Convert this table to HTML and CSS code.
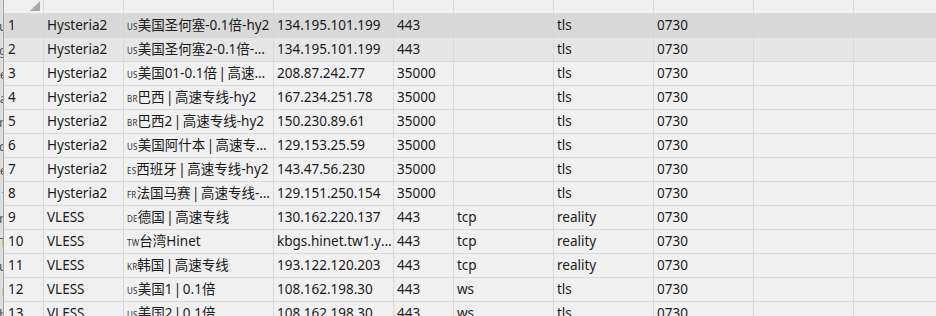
FILE: index.html
```html
<!DOCTYPE html>
<html>
<head>
<meta charset="utf-8">
<link rel="stylesheet" href="styles.css">
</head>
<body>
<div class="view">
  <div class="strip">
    <div class="frag hdr"></div>
    <div class="frag">u</div>
    <div class="frag">g</div>
    <div class="frag">e</div>
    <div class="frag">a</div>
    <div class="frag">n</div>
    <div class="frag">d</div>
    <div class="frag">e</div>
    <div class="frag">t</div>
    <div class="frag">n</div>
    <div class="frag">T</div>
    <div class="frag">u</div>
    <div class="frag">r</div>
    <div class="frag">h</div>
  </div>
  <div class="grid">
    <div class="row head">
      <div class="cell corner"><span class="tri"></span></div>
      <div class="cell"></div><div class="cell"></div><div class="cell"></div><div class="cell"></div>
      <div class="cell"></div><div class="cell"></div><div class="cell"></div><div class="cell"></div><div class="cell"></div>
    </div>
    <div class="row sel">
      <div class="cell num">1</div><div class="cell">Hysteria2</div><div class="cell name"><span class="flag">US</span>美国圣何塞-0.1倍-hy2</div><div class="cell">134.195.101.199</div><div class="cell">443</div><div class="cell"></div><div class="cell">tls</div><div class="cell">0730</div><div class="cell"></div><div class="cell"></div>
    </div>
    <div class="row hover">
      <div class="cell num">2</div><div class="cell">Hysteria2</div><div class="cell name"><span class="flag">US</span>美国圣何塞2-0.1倍-hy2</div><div class="cell">134.195.101.199</div><div class="cell">443</div><div class="cell"></div><div class="cell">tls</div><div class="cell">0730</div><div class="cell"></div><div class="cell"></div>
    </div>
    <div class="row">
      <div class="cell num">3</div><div class="cell">Hysteria2</div><div class="cell name"><span class="flag">US</span>美国01-0.1倍 | 高速专线-hy2</div><div class="cell">208.87.242.77</div><div class="cell">35000</div><div class="cell"></div><div class="cell">tls</div><div class="cell">0730</div><div class="cell"></div><div class="cell"></div>
    </div>
    <div class="row">
      <div class="cell num">4</div><div class="cell">Hysteria2</div><div class="cell name"><span class="flag">BR</span>巴西 | 高速专线-hy2</div><div class="cell">167.234.251.78</div><div class="cell">35000</div><div class="cell"></div><div class="cell">tls</div><div class="cell">0730</div><div class="cell"></div><div class="cell"></div>
    </div>
    <div class="row">
      <div class="cell num">5</div><div class="cell">Hysteria2</div><div class="cell name"><span class="flag">BR</span>巴西2 | 高速专线-hy2</div><div class="cell">150.230.89.61</div><div class="cell">35000</div><div class="cell"></div><div class="cell">tls</div><div class="cell">0730</div><div class="cell"></div><div class="cell"></div>
    </div>
    <div class="row">
      <div class="cell num">6</div><div class="cell">Hysteria2</div><div class="cell name"><span class="flag">US</span>美国阿什本 | 高速专线-hy2</div><div class="cell">129.153.25.59</div><div class="cell">35000</div><div class="cell"></div><div class="cell">tls</div><div class="cell">0730</div><div class="cell"></div><div class="cell"></div>
    </div>
    <div class="row">
      <div class="cell num">7</div><div class="cell">Hysteria2</div><div class="cell name"><span class="flag">ES</span>西班牙 | 高速专线-hy2</div><div class="cell">143.47.56.230</div><div class="cell">35000</div><div class="cell"></div><div class="cell">tls</div><div class="cell">0730</div><div class="cell"></div><div class="cell"></div>
    </div>
    <div class="row">
      <div class="cell num">8</div><div class="cell">Hysteria2</div><div class="cell name"><span class="flag">FR</span>法国马赛 | 高速专线-hy2</div><div class="cell">129.151.250.154</div><div class="cell">35000</div><div class="cell"></div><div class="cell">tls</div><div class="cell">0730</div><div class="cell"></div><div class="cell"></div>
    </div>
    <div class="row">
      <div class="cell num">9</div><div class="cell">VLESS</div><div class="cell name"><span class="flag">DE</span>德国 | 高速专线</div><div class="cell">130.162.220.137</div><div class="cell">443</div><div class="cell">tcp</div><div class="cell">reality</div><div class="cell">0730</div><div class="cell"></div><div class="cell"></div>
    </div>
    <div class="row">
      <div class="cell num">10</div><div class="cell">VLESS</div><div class="cell name"><span class="flag">TW</span>台湾Hinet</div><div class="cell">kbgs.hinet.tw1.yydsii.com</div><div class="cell">443</div><div class="cell">tcp</div><div class="cell">reality</div><div class="cell">0730</div><div class="cell"></div><div class="cell"></div>
    </div>
    <div class="row">
      <div class="cell num">11</div><div class="cell">VLESS</div><div class="cell name"><span class="flag">KR</span>韩国 | 高速专线</div><div class="cell">193.122.120.203</div><div class="cell">443</div><div class="cell">tcp</div><div class="cell">reality</div><div class="cell">0730</div><div class="cell"></div><div class="cell"></div>
    </div>
    <div class="row">
      <div class="cell num">12</div><div class="cell">VLESS</div><div class="cell name"><span class="flag">US</span>美国1 | 0.1倍</div><div class="cell">108.162.198.30</div><div class="cell">443</div><div class="cell">ws</div><div class="cell">tls</div><div class="cell">0730</div><div class="cell"></div><div class="cell"></div>
    </div>
    <div class="row">
      <div class="cell num">13</div><div class="cell">VLESS</div><div class="cell name"><span class="flag">US</span>美国2 | 0.1倍</div><div class="cell">108.162.198.30</div><div class="cell">443</div><div class="cell">ws</div><div class="cell">tls</div><div class="cell">0730</div><div class="cell"></div><div class="cell"></div>
    </div>
  </div>
</div>
</body>
</html>
```
FILE: styles.css
```css
html, body {
  margin: 0;
  padding: 0;
  width: 936px;
  height: 316px;
  overflow: hidden;
  background: #f0f0f0;
}
.view {
  display: flex;
  align-items: flex-start;
  font-family: "Noto Sans", "Noto Sans CJK SC", sans-serif;
  font-size: 13.5px;
  color: #1b1b1b;
}
.strip {
  width: 3px;
  flex: none;
  border-right: 1px solid #a6a6a6;
  background: #dedede;
  display: flex;
  flex-direction: column;
  overflow: hidden;
  height: 316px;
}
.frag {
  height: 24px;
  line-height: 24px;
  flex: none;
  display: flex;
  justify-content: flex-end;
  color: #555;
  font-size: 13px;
  margin-right: -4px;
  overflow: visible;
  white-space: nowrap;
}
.frag.hdr {
  height: 14px;
}
.grid {
  display: flex;
  flex-direction: column;
  flex: none;
}
.row {
  display: grid;
  grid-template-columns: 40px 80px 150px 120px 60px 100px 100px 100px 100px 100px;
  height: 24px;
  box-sizing: border-box;
  border-bottom: 1px solid #dadada;
}
.row.head {
  height: 14px;
}
.cell {
  box-sizing: border-box;
  border-right: 1px solid #dadada;
  padding-left: 3px;
  line-height: 23px;
  white-space: nowrap;
  overflow: hidden;
  text-overflow: ellipsis;
}
.cell.num {
  padding-left: 4px;
}
.cell.name {
  word-spacing: -2px;
}
.corner {
  position: relative;
}
.tri {
  position: absolute;
  right: 3px;
  top: 1px;
  width: 0;
  height: 0;
  border-left: 10px solid transparent;
  border-bottom: 10px solid #a9a9a9;
}
.row.sel {
  background: #d9d9d9;
  border-bottom-color: #d6d6d6;
}
.row.sel .cell {
  border-right-color: #d6d6d6;
}
.row.hover {
  background: #e6e6e6;
}
.flag {
  font-size: 8px;
  letter-spacing: 0.2px;
  color: #333;
}
```
